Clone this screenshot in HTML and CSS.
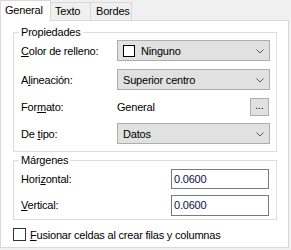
FILE: index.html
```html
<!DOCTYPE html>
<html>
<head>
	<meta charset="utf-8">
	<title>Formato de celda</title>
	<link rel="stylesheet" href="styles.css">
</head>
<body>
	<div class="dialog">
		<!--pestañas-->
		<div class="tabs">
			<div class="tab active">General</div>
			<div class="tab">Texto</div>
			<div class="tab">Bordes</div>
		</div>
		<div class="panel">
			<fieldset class="group props">
				<legend>Propiedades</legend>
				<span class="lbl"><u>C</u>olor de relleno:</span>
				<div class="combo">
					<span class="swatch"></span>
					<span class="val">Ninguno</span>
					<svg class="chev" width="8" height="5" viewBox="0 0 8 5"><polyline points="0.5,0.5 4,4 7.5,0.5" fill="none" stroke="#5a5a5a" stroke-width="1"/></svg>
				</div>
				<span class="lbl">A<u>l</u>ineación:</span>
				<div class="combo">
					<span class="val">Superior centro</span>
					<svg class="chev" width="8" height="5" viewBox="0 0 8 5"><polyline points="0.5,0.5 4,4 7.5,0.5" fill="none" stroke="#5a5a5a" stroke-width="1"/></svg>
				</div>
				<span class="lbl">For<u>m</u>ato:</span>
				<div class="fmt">
					<span class="val">General</span>
					<span class="btn">...</span>
				</div>
				<span class="lbl">De <u>t</u>ipo:</span>
				<div class="combo">
					<span class="val">Datos</span>
					<svg class="chev" width="8" height="5" viewBox="0 0 8 5"><polyline points="0.5,0.5 4,4 7.5,0.5" fill="none" stroke="#5a5a5a" stroke-width="1"/></svg>
				</div>
			</fieldset>
			<fieldset class="group margins">
				<legend>Márgenes</legend>
				<span class="lbl">Hori<u>z</u>ontal:</span>
				<div class="input">0.0600</div>
				<span class="lbl"><u>V</u>ertical:</span>
				<div class="input">0.0600</div>
			</fieldset>
			<div class="check">
				<span class="box"></span>
				<span><u>F</u>usionar celdas al crear filas y columnas</span>
			</div>
		</div>
	</div>
</body>
</html>
```

FILE: styles.css
```css
* {
	margin: 0;
	padding: 0;
	box-sizing: border-box;
}

body {
	background-color: #f0f0f0;
	font-family: "Liberation Sans", Arial, sans-serif;
	font-size: 11px;
	letter-spacing: -0.2px;
	color: #000;
}

u {
	text-decoration: underline;
	text-underline-offset: 1px;
}

.dialog {
	width: 289px;
}

.tabs {
	display: flex;
	align-items: flex-end;
	height: 20px;
	position: relative;
	z-index: 1;
}

.tab {
	height: 18px;
	line-height: 16px;
	padding: 0 4px 0 4px;
	border: 1px solid #d9d9d9;
	border-bottom: none;
	border-left: none;
	background-color: #f0f0f0;
}

.tab:nth-child(2) {
	width: 40px;
}

.tab:nth-child(3) {
	width: 41px;
	padding-left: 5px;
}

.tab.active {
	width: 51px;
	height: 21px;
	line-height: 18px;
	margin-bottom: -1px;
	padding-left: 4px;
	background-color: #fff;
	border-left: 1px solid #d9d9d9;
}

.panel {
	height: 228px;
	padding: 5px 11px 0 12px;
	background-color: #fff;
	border: 1px solid #d9d9d9;
	display: flex;
	flex-direction: column;
}

.group {
	border: 1px solid #dcdcdc;
	display: grid;
	grid-template-columns: 96px 1fr;
	align-items: center;
}

.group legend {
	padding: 0 2px;
	margin-left: -2px;
	line-height: 13px;
}

.props {
	padding: 1px 6px 7px 7px;
	grid-template-rows: 21px 21px 17px 21px;
	row-gap: 8px;
}

.margins {
	margin-top: 2px;
	padding: 2px 6px 4px 7px;
	grid-template-columns: 150px 1fr;
	grid-template-rows: 20px 20px;
	row-gap: 6px;
}

.combo {
	height: 21px;
	display: flex;
	align-items: center;
	padding: 0 5px 0 5px;
	background-color: #e1e1e1;
	border: 1px solid #adadad;
}

.combo .val {
	flex: 1;
}

.swatch {
	width: 12px;
	height: 12px;
	margin-right: 6px;
	border: 1px solid #000;
	background-color: #fff;
}

.chev {
	margin-top: 1px;
}

.fmt {
	height: 18px;
	display: flex;
	align-items: center;
	align-self: start;
}

.fmt .val {
	flex: 1;
}

.btn {
	width: 19px;
	height: 18px;
	margin-right: 1px;
	line-height: 14px;
	text-align: center;
	background-color: #e1e1e1;
	border: 1px solid #adadad;
	font-size: 10px;
	letter-spacing: 0;
}

.input {
	height: 20px;
	line-height: 18px;
	padding-left: 2px;
	margin-right: 1px;
	border: 1px solid #7a7a7a;
	color: #10104a;
}

.margins .input:last-child {
	height: 21px;
}

.check {
	display: flex;
	align-items: center;
	gap: 4px;
	margin-top: 8px;
}

.box {
	width: 13px;
	height: 13px;
	border: 1px solid #333;
	background-color: #fff;
}
```
